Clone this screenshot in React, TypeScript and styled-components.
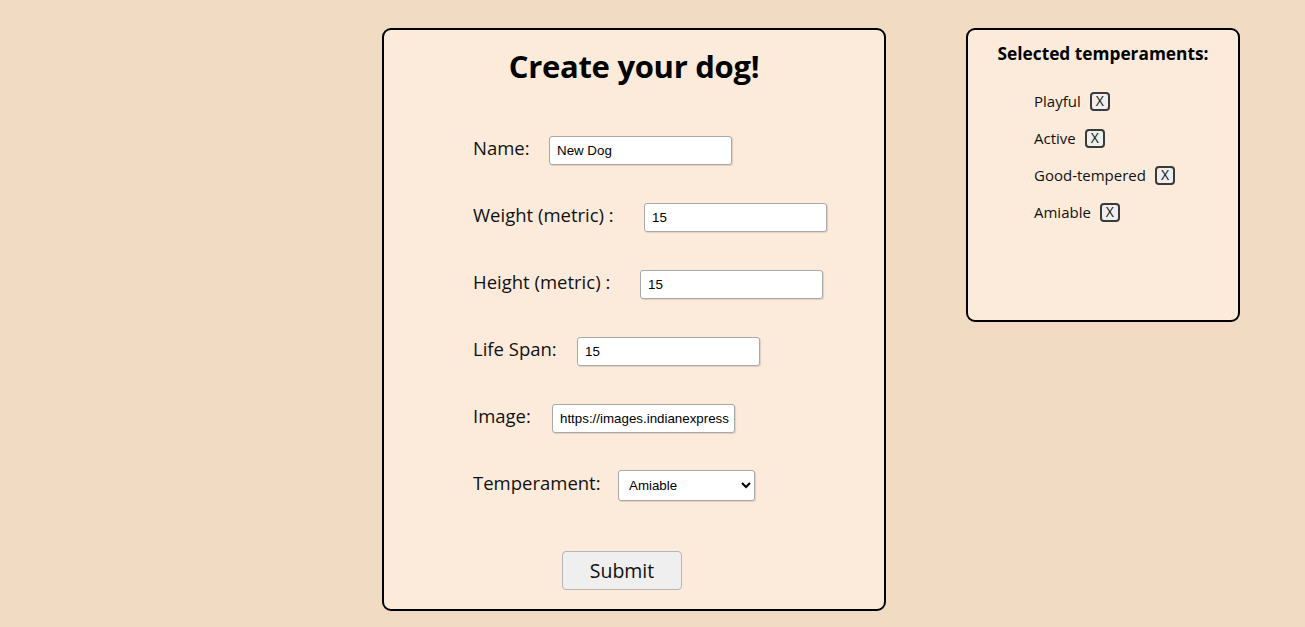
import React from "react";
import styled, { createGlobalStyle } from "styled-components";

const Global = createGlobalStyle`
  html, body { margin: 0; padding: 0; }
  body {
    background: #f2dbc3;
    font-family: "Open Sans", "Noto Sans", sans-serif;
    color: #000;
  }
`;

const Page = styled.div`
  display: flex;
  align-items: flex-start;
  gap: 80px;
  padding: 28px 0 0 382px;
  min-height: 627px;
  box-sizing: border-box;
`;

const Panel = styled.div<{ $w: number; $h: number }>`
  box-sizing: border-box;
  width: ${(p) => p.$w}px;
  height: ${(p) => p.$h}px;
  background: #fcebdb;
  border: 2px solid #000;
  border-radius: 9px;
  display: flex;
  flex-direction: column;
`;

const Title = styled.h1`
  margin: 14px 0 0;
  text-align: center;
  font-size: 31px;
  font-weight: 700;
  line-height: 44px;
  letter-spacing: -0.3px;
`;

const Form = styled.form`
  display: flex;
  flex-direction: column;
  gap: 38px;
  padding: 48px 0 0 89px;
`;

const Row = styled.div`
  display: flex;
  align-items: center;
  height: 29px;
`;

const Label = styled.label<{ $w: number }>`
  width: ${(p) => p.$w}px;
  flex: none;
  font-size: 18.5px;
  line-height: 24px;
  margin-top: -5px;
  color: #111;
`;

const TextInput = styled.input`
  box-sizing: border-box;
  width: 183px;
  height: 29px;
  padding: 0 2px 0 7px;
  border: 1px solid #a9a9a9;
  border-radius: 3px;
  background: #fff;
  box-shadow: 1px 1px 1px rgba(0, 0, 0, 0.12);
  font-family: "Liberation Sans", Arial, sans-serif;
  font-size: 13.33px;
  color: #000;
  outline: none;
`;

const Select = styled.select`
  box-sizing: border-box;
  width: 137px;
  height: 31px;
  padding: 0 6px;
  border: 1px solid #a9a9a9;
  border-radius: 3px;
  background: #fff;
  box-shadow: 1px 1px 1px rgba(0, 0, 0, 0.12);
  font-family: "Liberation Sans", Arial, sans-serif;
  font-size: 13.33px;
  color: #000;
`;

const Submit = styled.button`
  box-sizing: border-box;
  align-self: flex-start;
  margin: 51px 0 0 178px;
  width: 120px;
  height: 39px;
  background: #efefef;
  border: 1px solid #b5b5b5;
  border-radius: 4px;
  font-family: "Open Sans", sans-serif;
  font-size: 19.5px;
  color: #111;
  padding: 0;
`;

const SideTitle = styled.h3`
  margin: 12px 0 0;
  text-align: center;
  font-size: 17.3px;
  font-weight: 700;
  line-height: 24px;
`;

const List = styled.ul`
  list-style: none;
  margin: 26px 0 0;
  padding: 0 0 0 66px;
  display: flex;
  flex-direction: column;
  gap: 19px;
`;

const Item = styled.li`
  display: flex;
  align-items: center;
  gap: 9px;
  height: 18px;
  font-size: 15px;
  color: #111;
`;

const XButton = styled.button`
  box-sizing: border-box;
  width: 20px;
  height: 19px;
  padding: 0;
  background: #efefef;
  border: 2px solid #3a3a3a;
  border-radius: 4px;
  font-family: "Open Sans", sans-serif;
  font-size: 14px;
  line-height: 14px;
  color: #111;
`;

const fields = [
  { label: "Name:", w: 76, value: "New Dog" },
  { label: "Weight (metric) :", w: 171, value: "15" },
  { label: "Height (metric) :", w: 167, value: "15" },
  { label: "Life Span:", w: 104, value: "15" },
  { label: "Image:", w: 79, value: "https://images.indianexpress" },
];

const temps = ["Playful", "Active", "Good-tempered", "Amiable"];

export default function App() {
  return (
    <>
      <Global />
      <Page>
        <Panel $w={504} $h={583}>
          <Title>Create your dog!</Title>
          <Form onSubmit={(e) => e.preventDefault()}>
            {fields.map((f) => (
              <Row key={f.label}>
                <Label $w={f.w}>{f.label}</Label>
                <TextInput defaultValue={f.value} />
              </Row>
            ))}
            <Row>
              <Label $w={145}>Temperament:</Label>
              <Select defaultValue="Amiable">
                <option>Playful</option>
                <option>Active</option>
                <option>Good-tempered</option>
                <option>Amiable</option>
              </Select>
            </Row>
          </Form>
          <Submit type="button">Submit</Submit>
        </Panel>
        <Panel $w={274} $h={294}>
          <SideTitle>Selected temperaments:</SideTitle>
          <List>
            {temps.map((t) => (
              <Item key={t}>
                {t}
                <XButton type="button">X</XButton>
              </Item>
            ))}
          </List>
        </Panel>
      </Page>
    </>
  );
}
